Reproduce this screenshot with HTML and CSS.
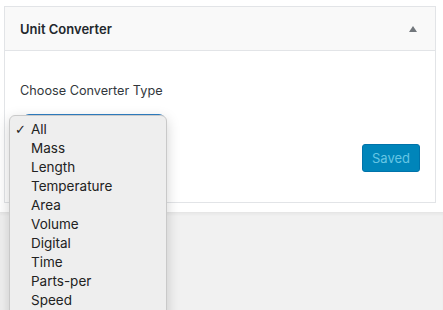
FILE: index.html
```html
<!DOCTYPE html>
<html>
<head>
<meta charset="utf-8">
<link rel="stylesheet" href="styles.css">
</head>
<body>
<div class="page">
  <div class="panel">
    <div class="panel-head">
      <h2 class="panel-title">Unit Converter</h2>
      <span class="toggle"></span>
    </div>
    <div class="panel-body">
      <p class="label">Choose Converter Type</p>
      <div class="select-row">
        <div class="select"></div>
      </div>
      <div class="actions">
        <button class="btn-saved">Saved</button>
      </div>
    </div>
  </div>
  <div class="gap"></div>
  <div class="footer"></div>
</div>
<ul class="menu">
  <li class="checked"><span class="check">✓</span>All</li>
  <li>Mass</li>
  <li>Length</li>
  <li>Temperature</li>
  <li>Area</li>
  <li>Volume</li>
  <li>Digital</li>
  <li>Time</li>
  <li>Parts-per</li>
  <li>Speed</li>
</ul>
</body>
</html>
```

FILE: styles.css
```css
html, body {
  margin: 0;
  padding: 0;
  background: #ffffff;
  height: 100%;
  overflow: hidden;
}
body {
  font-family: Inter, "Noto Sans", "Liberation Sans", sans-serif;
  color: #23282d;
}
.page {
  display: flex;
  flex-direction: column;
  min-height: 310px;
}
.panel {
  margin: 6px 7px 0 4px;
  border: 1px solid #e2e4e7;
  background: #fff;
}
.panel-head {
  display: flex;
  align-items: center;
  justify-content: space-between;
  height: 43px;
  padding: 0 18px 0 15px;
  background: #f9f9f9;
  border-bottom: 1px solid #e2e4e7;
}
.panel-title {
  margin: 0;
  font-size: 13px;
  font-weight: 600;
  color: #23282d;
}
.toggle {
  width: 0;
  height: 0;
  border-left: 4px solid transparent;
  border-right: 4px solid transparent;
  border-bottom: 6px solid #72777c;
}
.panel-body {
  padding: 31px 15px 14px 15px;
  height: 106px;
}
.label {
  margin: 0;
  font-size: 12.7px;
  line-height: 18px;
  color: #32373c;
}
.select-row {
  margin-top: 14px;
  height: 30px;
}
.select {
  width: 140px;
  height: 28px;
  margin-left: 3px;
  border: 1px solid #cccccc;
  border-top: 2px solid #2e7fc4;
  border-radius: 6px;
  background: #fff;
}
.actions {
  display: flex;
  justify-content: flex-end;
}
.btn-saved {
  width: 58px;
  height: 28px;
  border: 1px solid #0073aa;
  border-radius: 3px;
  background: #0085ba;
  color: #66c6e4;
  font-family: Inter, "Noto Sans", "Liberation Sans", sans-serif;
  font-size: 13px;
  padding: 0;
}
.gap {
  height: 9px;
  background: #fff;
}
.footer {
  flex: 1;
  background: #f1f1f1;
  border-top: 1px solid #e6e6e6;
  box-shadow: inset 0 2px 2px rgba(0,0,0,0.03);
}
.menu {
  position: absolute;
  left: 9px;
  top: 115px;
  width: 156px;
  margin: 0;
  padding: 4px 0 30px 0;
  list-style: none;
  background: #eeeeee;
  border: 1px solid #c9c9c9;
  border-radius: 6px;
  box-shadow: 0 4px 14px rgba(0,0,0,0.18);
  font-size: 13.5px;
  color: #222;
}
.menu li {
  position: relative;
  height: 19px;
  line-height: 19px;
  padding-left: 21px;
}
.check {
  position: absolute;
  left: 5px;
  top: 0;
  font-family: "DejaVu Sans", sans-serif;
  font-size: 13px;
  font-weight: 400;
}
```
